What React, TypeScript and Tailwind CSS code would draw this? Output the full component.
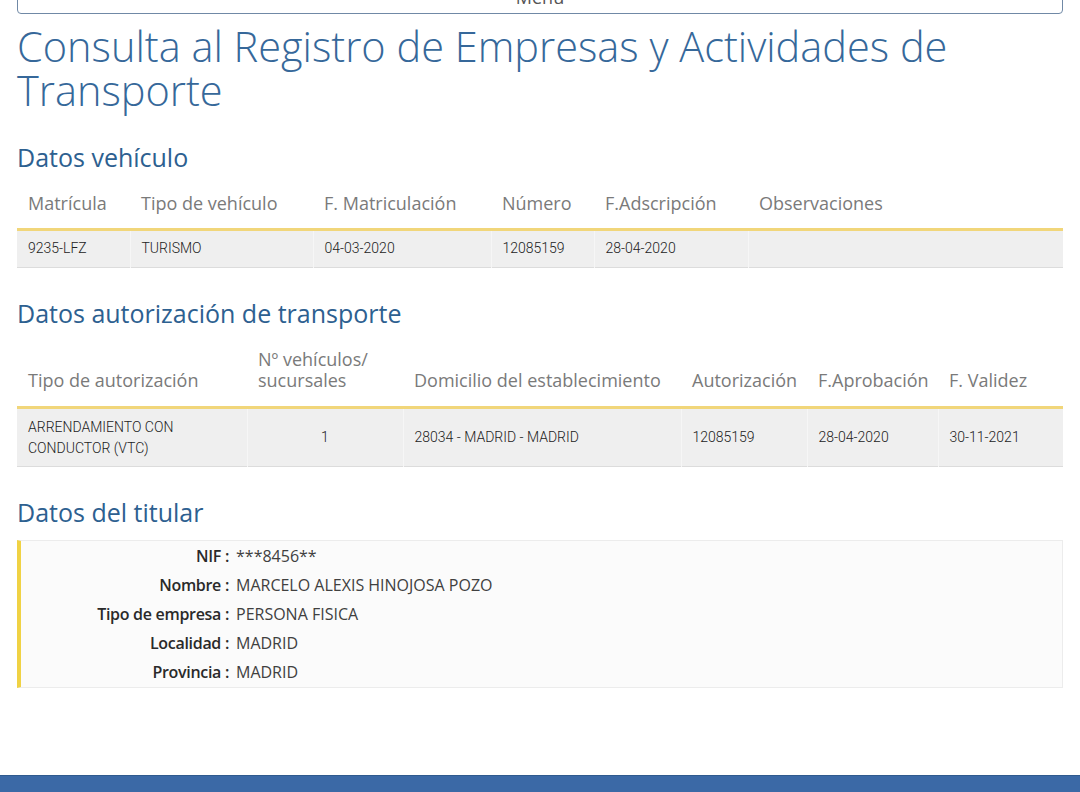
import React from "react";

const sans = { fontFamily: '"Open Sans", "Noto Sans", sans-serif' };
const roboto = { fontFamily: 'Roboto, "Noto Sans", sans-serif', fontWeight: 300 };

function Th({ children, className = "" }: { children: React.ReactNode; className?: string }) {
  return (
    <th
      className={"text-left font-normal text-[18px] text-[#7a7a7a] pl-[11px] pr-2 align-bottom " + className}
      style={sans}
    >
      {children}
    </th>
  );
}

function Td({ children, className = "" }: { children?: React.ReactNode; className?: string }) {
  return (
    <td
      className={"text-[14px] text-[#222] pl-[11px] pr-2 border-r border-[#f6f6f6] last:border-r-0 " + className}
      style={roboto}
    >
      {children}
    </td>
  );
}

function Heading({ children, className = "" }: { children: React.ReactNode; className?: string }) {
  return (
    <h2
      className={"text-[25px] leading-[32px] text-[#2d6090] " + className}
      style={{ fontFamily: '"Open Sans", "Noto Sans", sans-serif' }}
    >
      {children}
    </h2>
  );
}

const rows: [string, string][] = [
  ["NIF", "***8456**"],
  ["Nombre", "MARCELO ALEXIS HINOJOSA POZO"],
  ["Tipo de empresa", "PERSONA FISICA"],
  ["Localidad", "MADRID"],
  ["Provincia", "MADRID"],
];

export default function App() {
  return (
    <div className="w-[1080px] h-[792px] overflow-hidden bg-white flex flex-col">
      <div className="px-[17px]">
        <div className="-mt-[20px] h-[34px] border border-[#7089a6] rounded-b-[4px] flex items-center justify-center">
          <span className="text-[18px] text-[#555]" style={sans}>Menú</span>
        </div>

        <h1
          className="mt-[10px] text-[41.5px] leading-[44px] text-[#36689a]"
          style={{ fontFamily: '"Open Sans", sans-serif', fontWeight: 300 }}
        >
          Consulta al Registro de Empresas y Actividades de Transporte
        </h1>

        <Heading className="mt-[29px]">Datos vehículo</Heading>

        <table className="mt-[7px] w-full table-fixed border-collapse">
          <colgroup>
            <col className="w-[113px]" />
            <col className="w-[183px]" />
            <col className="w-[178px]" />
            <col className="w-[103px]" />
            <col className="w-[154px]" />
            <col />
          </colgroup>
          <thead>
            <tr className="h-[49px]">
              <Th className="align-middle">Matrícula</Th>
              <Th className="align-middle">Tipo de vehículo</Th>
              <Th className="align-middle">F. Matriculación</Th>
              <Th className="align-middle">Número</Th>
              <Th className="align-middle">F.Adscripción</Th>
              <Th className="align-middle">Observaciones</Th>
            </tr>
          </thead>
          <tbody className="border-t-[3px] border-[#f1d67a]">
            <tr className="h-[38px] bg-[#efefef] border-b border-[#dcdcdc]">
              <Td>9235-LFZ</Td>
              <Td>TURISMO</Td>
              <Td>04-03-2020</Td>
              <Td>12085159</Td>
              <Td>28-04-2020</Td>
              <Td />
            </tr>
          </tbody>
        </table>

        <Heading className="mt-[29px]">Datos autorización de transporte</Heading>

        <table className="mt-[13px] w-full table-fixed border-collapse">
          <colgroup>
            <col className="w-[230px]" />
            <col className="w-[156px]" />
            <col className="w-[278px]" />
            <col className="w-[126px]" />
            <col className="w-[131px]" />
            <col />
          </colgroup>
          <thead>
            <tr className="h-[66px]">
              <Th className="pb-[15px] leading-[21px]">Tipo de autorización</Th>
              <Th className="pb-[15px] leading-[21px]">
                Nº vehículos/
                <br />
                sucursales
              </Th>
              <Th className="pb-[15px] leading-[21px]">Domicilio del establecimiento</Th>
              <Th className="pb-[15px] leading-[21px]">Autorización</Th>
              <Th className="pb-[15px] leading-[21px]">F.Aprobación</Th>
              <Th className="pb-[15px] leading-[21px]">F. Validez</Th>
            </tr>
          </thead>
          <tbody className="border-t-[3px] border-[#f1d67a]">
            <tr className="h-[59px] bg-[#efefef] border-b border-[#dcdcdc]">
              <Td className="leading-[21px]">
                ARRENDAMIENTO CON
                <br />
                CONDUCTOR (VTC)
              </Td>
              <Td className="text-center !pl-0 !pr-0">1</Td>
              <Td>28034 - MADRID - MADRID</Td>
              <Td>12085159</Td>
              <Td>28-04-2020</Td>
              <Td>30-11-2021</Td>
            </tr>
          </tbody>
        </table>

        <Heading className="mt-[29px]">Datos del titular</Heading>

        <div className="mt-[12px] border border-[#ececec] border-l-[4px] border-l-[#f0d244] bg-[#fbfbfb] flex flex-col">
          {rows.map(([k, v]) => (
            <div key={k} className="h-[29.2px] flex items-center">
              <div
                className="w-[208px] text-right text-[16px] text-[#2a2a2a] shrink-0 tracking-[-0.3px]"
                style={{ fontFamily: '"Open Sans", sans-serif', fontWeight: 600 }}
              >
                {k} :
              </div>
              <div
                className="pl-[7px] text-[16px] text-[#404040]"
                style={{ fontFamily: '"Open Sans", "Noto Sans", sans-serif', fontWeight: 400 }}
              >
                {v}
              </div>
            </div>
          ))}
        </div>
      </div>

      <div className="mt-[87px] h-[40px] shrink-0 bg-[#3b69a6] border-t border-[#2f5a8e]" />
    </div>
  );
}
